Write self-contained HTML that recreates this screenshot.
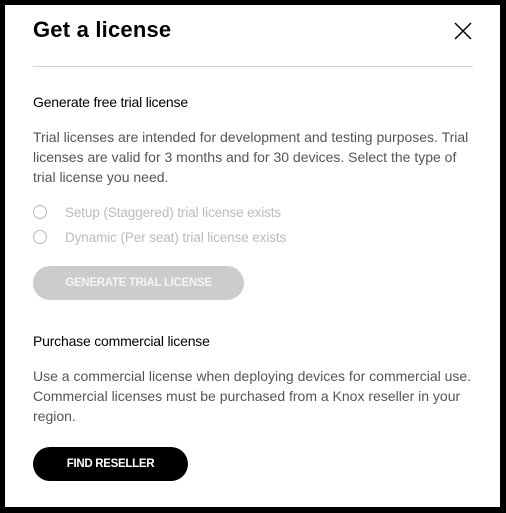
<!DOCTYPE html>
<html><head><meta charset="utf-8"><style>
*{margin:0;padding:0;box-sizing:border-box}
html,body{width:506px;height:513px;background:#000;overflow:hidden}
body{font-family:"Liberation Sans",sans-serif;position:relative}
.card{position:absolute;left:5px;top:5px;width:495px;height:502px;background:#fff}
.a{position:absolute;white-space:nowrap}
.t{left:33px;top:17px;font-size:22px;font-weight:bold;color:#000;letter-spacing:0.2px}
.hr{position:absolute;left:33px;top:66px;width:440px;height:1px;background:#ccc}
.h{font-size:14px;color:#000;letter-spacing:-0.2px}
.p{font-size:14px;color:#555;line-height:20px;letter-spacing:0px}
.r{font-size:13.5px;color:#bbb;letter-spacing:-0.1px}
.c{position:absolute;width:14px;height:14px;border:1px solid #bbb;border-radius:50%;left:33px}
.b{position:absolute;left:33px;height:34px;border-radius:17px;font-size:11.5px;font-weight:bold;text-align:center;line-height:34px;letter-spacing:-0.3px}
</style></head><body>
<div class="card"></div>
<div class="a t">Get a license</div>
<svg style="position:absolute;left:453px;top:21px" width="20" height="20"><path d="M2 2L18 18M18 2L2 18" stroke="#000" stroke-width="1.5"/></svg>
<div class="hr"></div>
<div class="a h" style="left:33px;top:94px">Generate free trial license</div>
<div class="a p" style="left:33px;top:127px">Trial licenses are intended for development and testing purposes. Trial<br>licenses are valid for 3 months and for 30 devices. Select the type of<br>trial license you need.</div>
<div class="c" style="top:205px"></div>
<div class="a r" style="left:65px;top:205px">Setup (Staggered) trial license exists</div>
<div class="c" style="top:230px"></div>
<div class="a r" style="left:65px;top:230px">Dynamic (Per seat) trial license exists</div>
<div class="b" style="top:266px;width:211px;background:#ccc;color:#f4f4f4">GENERATE TRIAL LICENSE</div>
<div class="a h" style="left:33px;top:333px">Purchase commercial license</div>
<div class="a p" style="left:33px;top:366px">Use a commercial license when deploying devices for commercial use.<br>Commercial licenses must be purchased from a Knox reseller in your<br>region.</div>
<div class="b" style="top:447px;width:155px;background:#000;color:#fff">FIND RESELLER</div>
</body></html>
